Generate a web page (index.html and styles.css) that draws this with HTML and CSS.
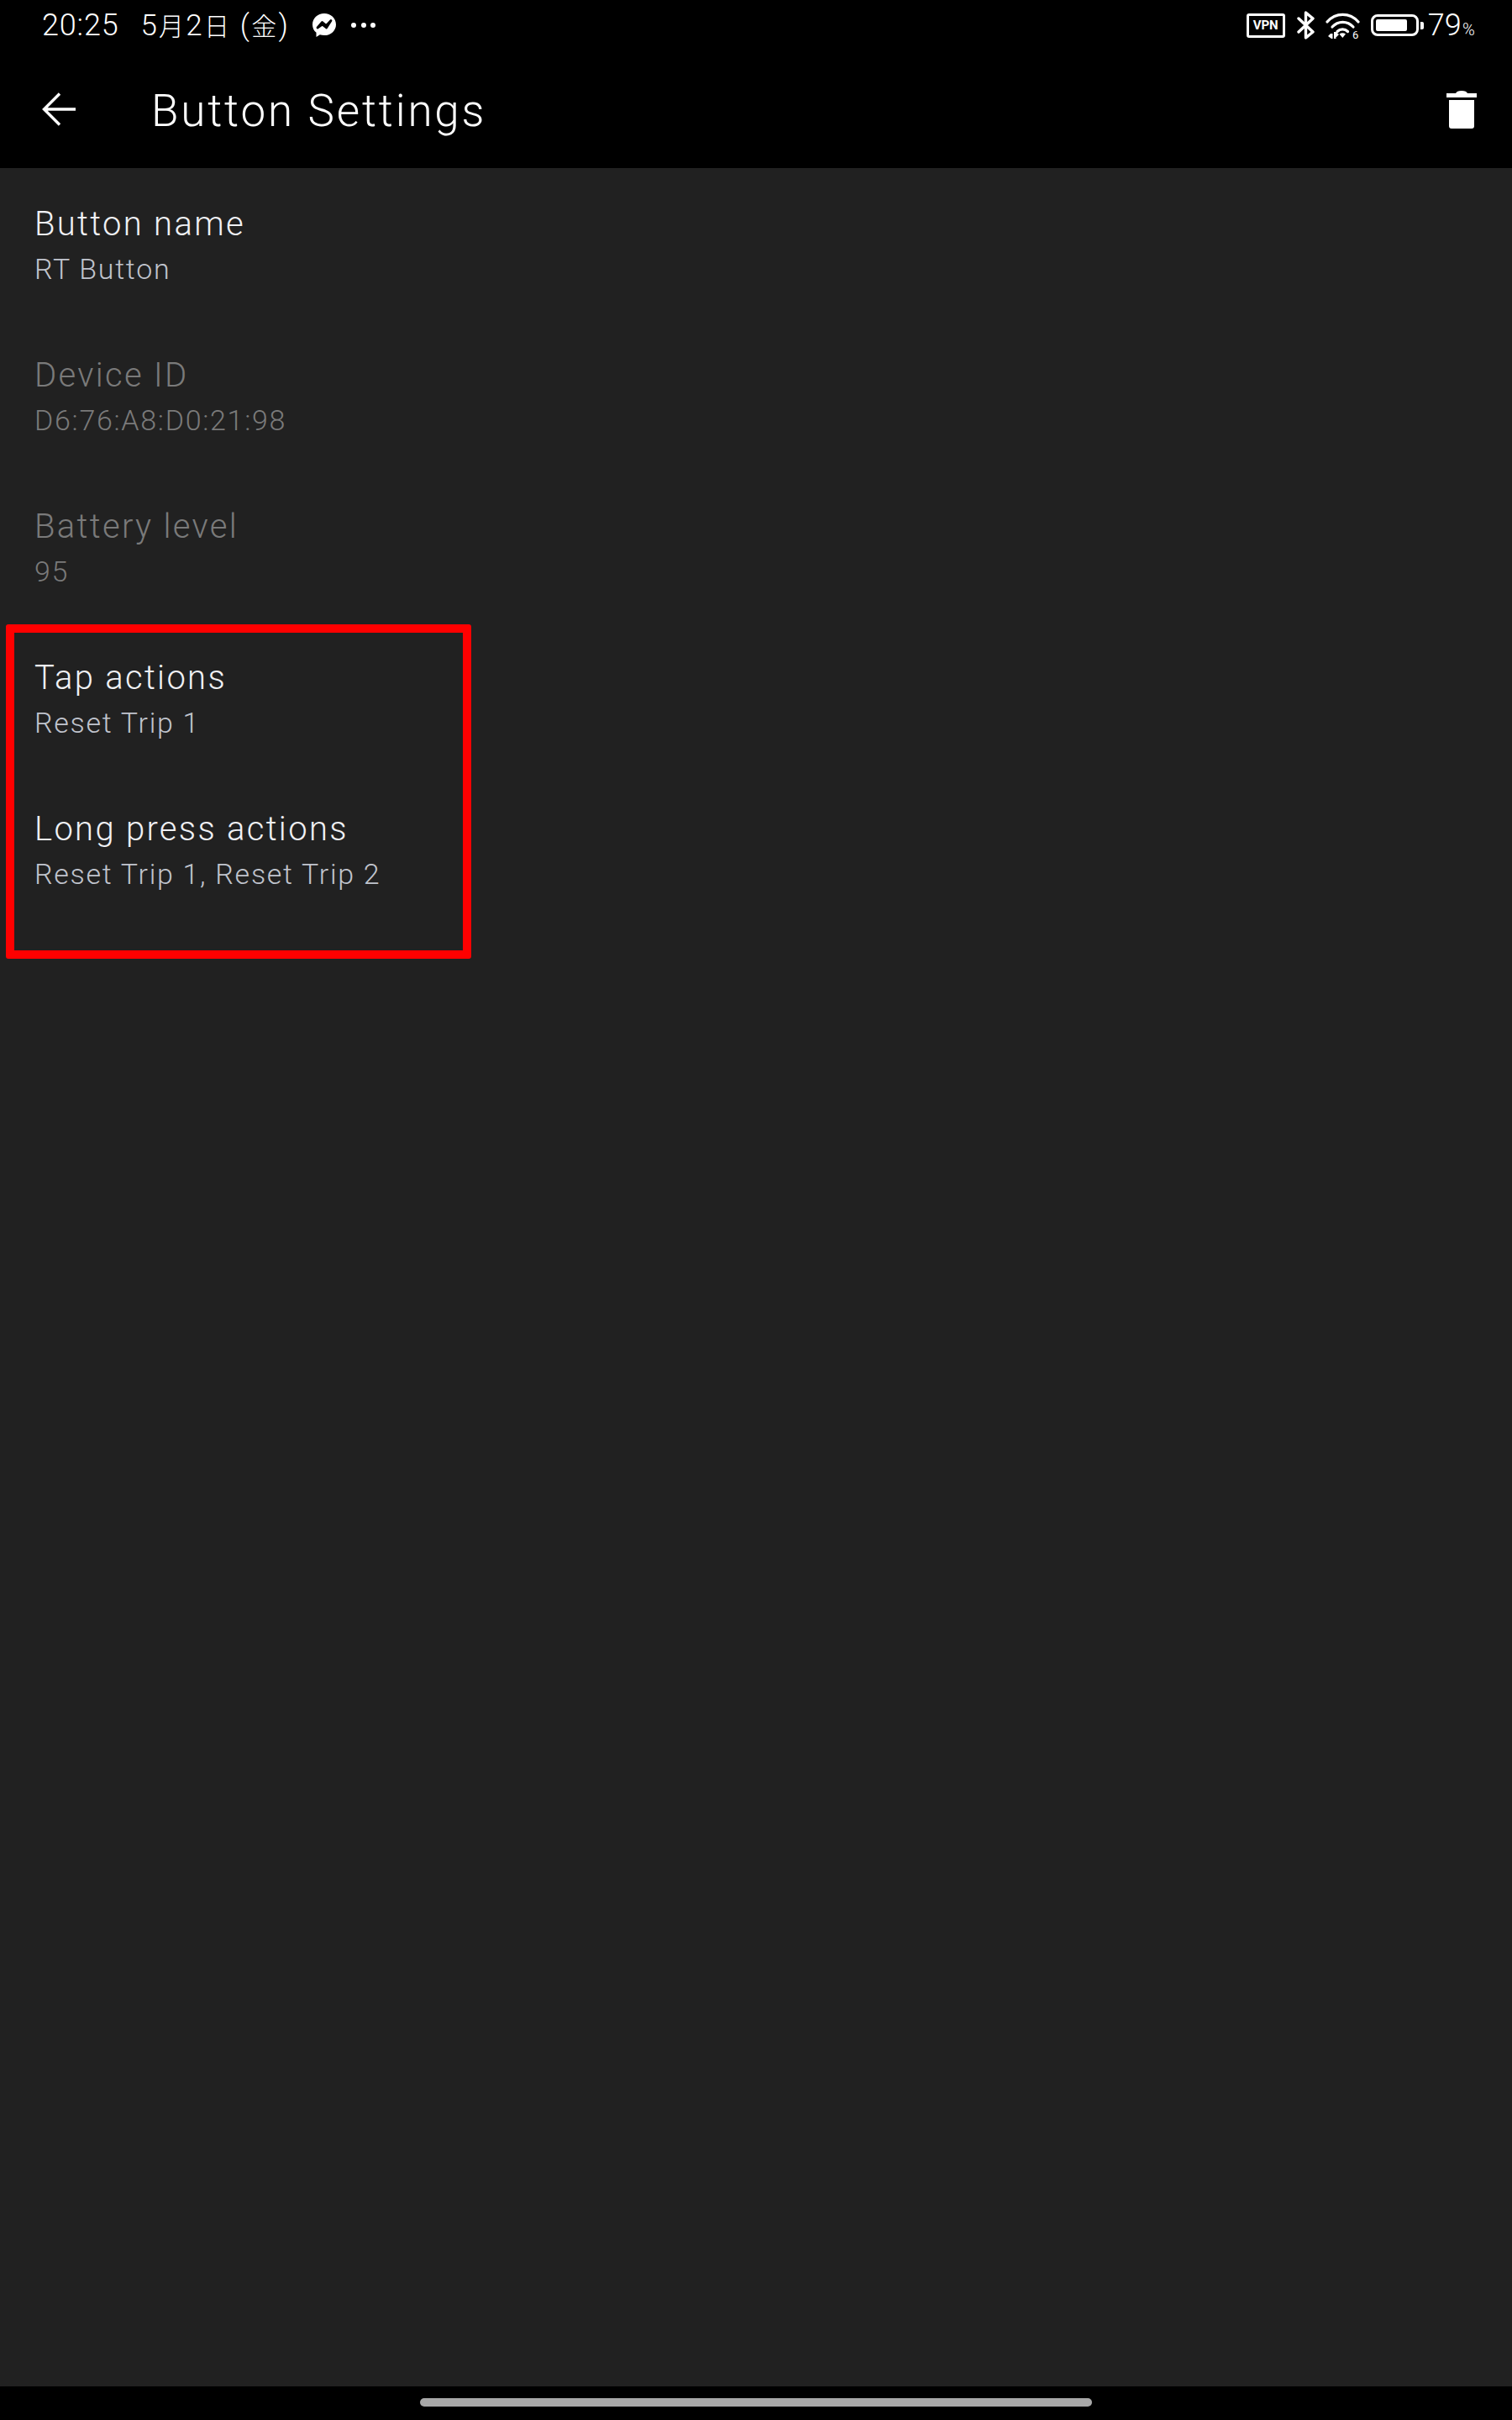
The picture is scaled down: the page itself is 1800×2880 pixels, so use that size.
FILE: index.html
```html
<!DOCTYPE html>
<html lang="ja">
<head>
<meta charset="utf-8">
<title>Button Settings</title>
<link rel="stylesheet" href="styles.css">
</head>
<body>
<div class="screen">
  <header class="top">
    <div class="status">
      <div class="status-left">
        <span class="time">20:25</span>
        <span class="date">5<span class="cjk">月</span>2<span class="cjk">日</span> <span class="paren">(</span><span class="cjk">金</span><span class="paren">)</span></span>
        <svg class="ic-msg" viewBox="0 0 28 28" width="28" height="28"><path fill="#fff" d="M14 0C6.2 0 0 5.8 0 13.2c0 3.900 1.700 7.300 4.500 9.600V28l4.400-2.700c1.600.5 3.300.8 5.100.8 7.800 0 14-5.600 14-12.900C28 5.800 21.800 0 14 0z"/><path fill="none" stroke="#000" stroke-width="2.800" stroke-linejoin="round" d="M6 17l5.600-6.500 4.800 4 5.600-6-5.400 8.500-4.800-3.800z"/></svg>
        <span class="dots"><i></i><i></i><i></i></span>
      </div>
      <div class="status-right">
        <span class="vpn">VPN</span>
        <svg class="ic-bt" viewBox="0 0 21 34" width="21" height="34"><path fill="none" stroke="#fff" stroke-width="3.400" stroke-linecap="round" stroke-linejoin="round" d="M2 9l17 16-8.500 7V2l8.500 7L2 25"/></svg>
        <svg class="ic-wifi" viewBox="0 -3 44 36" width="44" height="36"><g fill="none" stroke="#fff" stroke-width="3.200" stroke-linecap="round"><path d="M2 11C12-.5 29-.5 39 11"/><path d="M8 17c7-7.500 18-7.500 25 0"/><path d="M14 22.500c3.500-3.500 9-3.500 12.500 0"/></g><path fill="#fff" d="M16.500 25.500c2.200-1.600 5.300-1.600 7.500 0L20.300 30zM6 25h2.500v6H7l-4-3zM10 23h2.500l3.500 3-3 3h-.5v2H10z"/><text class="wifi-six" x="32" y="31">6</text></svg>
        <span class="battery"><span class="battery-fill"></span></span>
        <span class="battery-tip"></span>
        <span class="pct">79<small>%</small></span>
      </div>
    </div>
    <div class="appbar">
      <svg class="ic-back" viewBox="0 0 40 40" width="40" height="40"><path fill="none" stroke="#fff" stroke-width="3.400" d="M40 20H3M21 1.500L2.500 20 21 38.500"/></svg>
      <h1 class="title">Button Settings</h1>
      <svg class="ic-trash" viewBox="0 0 36 45" width="36" height="45"><path fill="#fff" d="M11 3c1-2 3-3 7-3s6 1 7 3h11v5H0V3zM3 11h30v31a3 3 0 0 1-3 3H6a3 3 0 0 1-3-3z"/></svg>
    </div>
  </header>
  <main class="list">
    <div class="row"><div class="row-title">Button name</div><div class="row-sub">RT Button</div></div>
    <div class="row off"><div class="row-title">Device ID</div><div class="row-sub">D6:76:A8:D0:21:98</div></div>
    <div class="row off"><div class="row-title">Battery level</div><div class="row-sub">95</div></div>
    <div class="row"><div class="row-title">Tap actions</div><div class="row-sub">Reset Trip 1</div></div>
    <div class="row"><div class="row-title">Long press actions</div><div class="row-sub">Reset Trip 1, Reset Trip 2</div></div>
    <div class="highlight"></div>
  </main>
  <footer class="nav"><span class="pill"></span></footer>
</div>
</body>
</html>
```
FILE: styles.css
```css
* { box-sizing: border-box; }
html, body { margin: 0; padding: 0; }
body { background: #000; font-family: Roboto, "Noto Sans CJK JP", sans-serif; color: #fff; }
.screen { width: 1800px; height: 2880px; display: flex; flex-direction: column; }
.top { height: 200px; background: #000; flex: none; }
.status { height: 60px; display: flex; justify-content: space-between; align-items: center; padding: 0 44px 0 50px; }
.status-left { display: flex; align-items: center; }
.time { font-size: 36px; font-weight: 300; line-height: 60px; letter-spacing: .8px; }
.date { font-size: 35px; font-weight: 300; line-height: 60px; margin-left: 26px; white-space: pre; letter-spacing: 2.200px; }
.cjk { font-family: "Noto Sans CJK JP", sans-serif; font-size: 30px; font-weight: 300; }
.paren { font-size: 35px; }
.ic-msg { margin-left: 27px; }
.dots { display: flex; gap: 5.500px; margin-left: 18px; }
.dots i { width: 6px; height: 6px; border-radius: 50%; background: #fff; }
.status-right { display: flex; align-items: center; }
.vpn { width: 46px; height: 29px; border: 3px solid #fff; border-radius: 3px; font-size: 15px; font-weight: 700; line-height: 23px; text-align: center; }
.ic-bt { margin-left: 14px; }
.ic-wifi { margin-left: 13px; margin-right: -3px; }
.wifi-six { font-family: Roboto, sans-serif; font-size: 13px; font-weight: 400; fill: #fff; }
.battery { width: 57px; height: 26px; margin-left: 13px; border: 3px solid #fff; border-radius: 8px; padding: 3px; display: block; }
.battery-fill { display: block; width: 37px; height: 14px; background: #fff; border-radius: 2px; }
.battery-tip { width: 4px; height: 9px; margin-left: 2px; background: #fff; border-radius: 0 2px 2px 0; }
.pct { margin-left: 5px; padding-top: 4px; font-size: 36px; font-weight: 300; line-height: 60px; letter-spacing: .2px; }
.pct small { font-size: 20px; margin-left: 1px; }
.appbar { height: 140px; display: flex; align-items: center; padding: 0 42px 0 50px; }
.title { margin: 4px 0 0 90px; font-size: 53px; font-weight: 300; letter-spacing: 2.800px; flex: 1; line-height: 60px; }
.list { flex: 1; background: #212121; position: relative; }
.row { height: 180px; padding: 40px 41px 0; }
.row-title { font-size: 40px; font-weight: 350; line-height: 54px; color: #f0f1f5; letter-spacing: 2.300px; }
.row-sub { font-size: 34px; font-weight: 350; line-height: 54px; margin-top: -1px; color: #c0c4cd; letter-spacing: 1.700px; }
.off .row-title, .off .row-sub { color: #7a7a7a; }
.highlight { position: absolute; left: 7px; top: 543px; width: 554px; height: 398px; border: 10px solid #f00; border-radius: 3px; }
.nav { height: 40px; flex: none; background: #000; display: flex; justify-content: center; padding-top: 14px; }
.pill { width: 800px; height: 10px; background: #a8a8a8; border-radius: 5px; }
```
